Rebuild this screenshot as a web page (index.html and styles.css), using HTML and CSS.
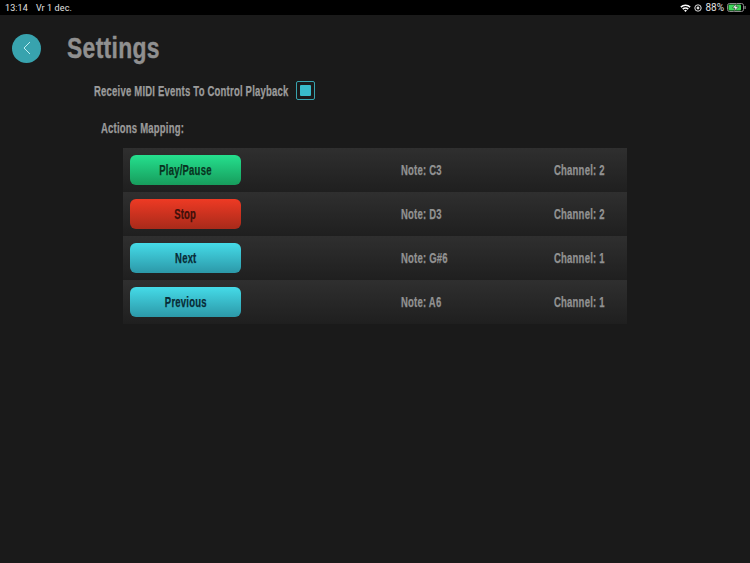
FILE: index.html
```html
<!DOCTYPE html>
<html lang="nl">
<head>
<meta charset="utf-8">
<title>Settings</title>
<link rel="stylesheet" href="styles.css">
</head>
<body>
<header class="status">
  <div class="status-left"><span>13:14</span><span>Vr 1 dec.</span></div>
  <div class="status-right">
    <svg class="wifi" width="11" height="8" viewBox="0 0 11 8"><path d="M0.3 2.6A7.4 7.4 0 0 1 10.7 2.6L9.6 3.8A5.8 5.8 0 0 0 1.4 3.8Z M2.2 4.6A4.7 4.7 0 0 1 8.8 4.6L7.7 5.7A3.2 3.2 0 0 0 3.3 5.7Z M4.1 6.5A2 2 0 0 1 6.9 6.5L5.5 8Z" fill="#fff"/></svg>
    <svg class="lock" width="8" height="8" viewBox="0 0 8 8"><circle cx="4" cy="4" r="3.2" fill="none" stroke="#ddd" stroke-width="1"/><circle cx="4" cy="4" r="1.4" fill="#ddd"/></svg>
    <span>88%</span>
    <svg class="battery" width="19" height="9" viewBox="0 0 19 9"><rect x="0.5" y="0.5" width="16" height="8" rx="2" fill="none" stroke="#8a8a8a"/><rect x="1.5" y="1.5" width="12.5" height="6" rx="1" fill="#3fd659"/><rect x="17.5" y="3" width="1.2" height="3" fill="#8a8a8a"/><path d="M9.5 0.5L5.5 5H8L7 8.5L11.5 3.8H8.8Z" fill="#fff" stroke="#111" stroke-width="0.5"/></svg>
  </div>
</header>
<main class="page">
  <div class="title-row">
    <button class="back" aria-label="Back">
      <svg width="8" height="14" viewBox="0 0 8 14"><path d="M7 1L1 7L7 13" fill="none" stroke="#bfeef2" stroke-width="1"/></svg>
    </button>
    <h1><span class="cond wide">Settings</span></h1>
  </div>
  <div class="receive">
    <span class="label-box"><span class="cond">Receive MIDI Events To Control Playback</span></span>
    <span class="check"><span class="check-fill"></span></span>
  </div>
  <div class="mapping-label"><span class="cond">Actions Mapping:</span></div>
  <div class="table">
    <div class="row">
      <button class="action green"><span class="cond mid">Play/Pause</span></button>
      <span class="note"><span class="cond">Note: C3</span></span>
      <span class="channel"><span class="cond">Channel: 2</span></span>
    </div>
    <div class="row">
      <button class="action red"><span class="cond mid">Stop</span></button>
      <span class="note"><span class="cond">Note: D3</span></span>
      <span class="channel"><span class="cond">Channel: 2</span></span>
    </div>
    <div class="row">
      <button class="action cyan"><span class="cond mid">Next</span></button>
      <span class="note"><span class="cond">Note: G#6</span></span>
      <span class="channel"><span class="cond">Channel: 1</span></span>
    </div>
    <div class="row">
      <button class="action cyan"><span class="cond mid">Previous</span></button>
      <span class="note"><span class="cond">Note: A6</span></span>
      <span class="channel"><span class="cond">Channel: 1</span></span>
    </div>
  </div>
</main>
</body>
</html>
```
FILE: styles.css
```css
* { box-sizing: border-box; }
html, body { margin: 0; height: 100%; }
body {
  width: 750px;
  height: 563px;
  overflow: hidden;
  background: #1a1a1a;
  font-family: "Liberation Sans", sans-serif;
  font-weight: 700;
  color: #9a9a9a;
}
.cond {
  display: inline-block;
  white-space: nowrap;
  letter-spacing: .3px;
  -webkit-text-stroke: .25px currentColor;
  transform: scaleX(.68);
  transform-origin: left center;
}
.cond.mid { transform-origin: center; }
.cond.wide {
  letter-spacing: .4px;
  -webkit-text-stroke: .4px currentColor;
  transform: scaleX(.79);
}
.status {
  height: 15px;
  background: #000;
  color: #e2e2e2;
  font-family: Roboto, sans-serif;
  font-weight: 400;
  font-size: 10px;
  display: flex;
  justify-content: space-between;
  align-items: center;
  padding: 0 4px 0 5px;
}
.status-left { display: flex; gap: 8px; font-size: 9px; letter-spacing: .1px; }
.status-right { display: flex; align-items: center; gap: 3px; }
.title-row {
  display: flex;
  align-items: center;
  height: 42px;
  margin-top: 12px;
  padding-left: 12px;
}
.back {
  width: 29px;
  height: 29px;
  border-radius: 50%;
  border: 0;
  padding: 0;
  background: #38a3ae;
  display: flex;
  align-items: center;
  justify-content: center;
}
h1 {
  margin: 0 0 0 26px;
  font-size: 29px;
  line-height: 42px;
  color: #909090;
}
.receive {
  display: flex;
  align-items: center;
  margin: 12px 0 0 94px;
  height: 19px;
  font-size: 14px;
  color: #9c9c9c;
}
.label-box { width: 202px; }
.check {
  width: 19px;
  height: 19px;
  border: 1px solid #38a3ae;
  border-radius: 2px;
  display: flex;
  align-items: center;
  justify-content: center;
}
.check-fill {
  width: 11px;
  height: 11px;
  border-radius: 1px;
  background: #38bccb;
}
.mapping-label {
  margin: 18px 0 0 101px;
  height: 20px;
  line-height: 20px;
  font-size: 14px;
}
.table {
  margin: 10px 0 0 123px;
  width: 504px;
}
.row {
  height: 44px;
  display: grid;
  grid-template-columns: 271px 153px 1fr;
  align-items: center;
  padding-left: 7px;
  background: linear-gradient(#2f2f2f, #1f1f1f);
  font-size: 14px;
  color: #929292;
}
.action {
  width: 111px;
  height: 30px;
  border: 0;
  border-radius: 6px;
  padding: 0;
  font: inherit;
}
.green { background: linear-gradient(#25e08e, #179c5c); color: #08331f; }
.red { background: linear-gradient(#ee3a24, #a82a1a); color: #40100a; }
.cyan { background: linear-gradient(#45dbe8, #2c98a8); color: #082c36; }
```
